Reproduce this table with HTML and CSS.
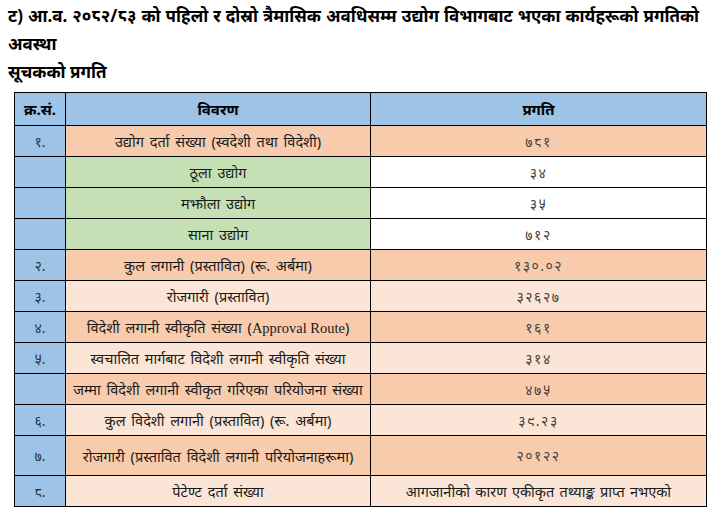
FILE: index.html
```html
<!DOCTYPE html>
<html lang="ne">
<head>
<meta charset="utf-8">
<link rel="stylesheet" href="styles.css">
</head>
<body>
<h1 class="title">ट) आ.व. २०८२/८३ को पहिलो र दोस्रो त्रैमासिक अवधिसम्म उद्योग विभागबाट भएका कार्यहरूको प्रगतिको अवस्था</h1>
<h2 class="subtitle">सूचकको प्रगति</h2>
<table class="progress">
  <colgroup><col class="c-sn"><col class="c-desc"><col class="c-val"></colgroup>
  <thead>
    <tr><th>क्र.सं.</th><th>विवरण</th><th>प्रगति</th></tr>
  </thead>
  <tbody>
    <tr class="dark"><td class="sn">१.</td><td>उद्योग दर्ता संख्या (स्वदेशी तथा विदेशी)</td><td class="num">७८१</td></tr>
    <tr class="green"><td class="sn"></td><td>ठूला उद्योग</td><td class="num">३४</td></tr>
    <tr class="green"><td class="sn"></td><td>मझौला उद्योग</td><td class="num">३५</td></tr>
    <tr class="green"><td class="sn"></td><td>साना उद्योग</td><td class="num">७१२</td></tr>
    <tr class="dark"><td class="sn">२.</td><td>कुल लगानी (प्रस्तावित) (रू. अर्बमा)</td><td class="num">१३०.०२</td></tr>
    <tr class="light"><td class="sn">३.</td><td>रोजगारी (प्रस्तावित)</td><td class="num">३२६२७</td></tr>
    <tr class="dark"><td class="sn">४.</td><td>विदेशी लगानी स्वीकृति संख्या (<span class="latin">Approval Route</span>)</td><td class="num">१६१</td></tr>
    <tr class="light"><td class="sn">५.</td><td>स्वचालित मार्गबाट विदेशी लगानी स्वीकृति संख्या</td><td class="num">३१४</td></tr>
    <tr class="dark"><td class="sn"></td><td>जम्मा विदेशी लगानी स्वीकृत गरिएका परियोजना संख्या</td><td class="num">४७५</td></tr>
    <tr class="light"><td class="sn">६.</td><td>कुल विदेशी लगानी (प्रस्तावित) (रू. अर्बमा)</td><td class="num">३९.२३</td></tr>
    <tr class="dark tall"><td class="sn">७.</td><td>रोजगारी (प्रस्तावित विदेशी लगानी परियोजनाहरूमा)</td><td class="num">२०१२२</td></tr>
    <tr class="light"><td class="sn">८.</td><td>पेटेण्ट दर्ता संख्या</td><td class="note">आगजानीको कारण एकीकृत तथ्याङ्क प्राप्त नभएको</td></tr>
  </tbody>
</table>
</body>
</html>
```

FILE: styles.css
```css
html, body {
  margin: 0;
  padding: 0;
  background: #ffffff;
}
body {
  padding: 0 8px;
  font-family: "Noto Sans", "Noto Serif Devanagari", "Lohit Devanagari", "FreeSerif", sans-serif;
  color: #000;
}
.title {
  margin: 0;
  font-size: 17px;
  font-weight: bold;
  line-height: 28px;
  padding-top: 2px;
  word-spacing: 0.6px;
}
.subtitle {
  margin: 0;
  font-size: 17px;
  font-weight: bold;
  line-height: 28px;
}
.progress {
  margin: 6px 0 0 6px;
  border-collapse: collapse;
  width: 692px;
  table-layout: fixed;
  border: 1.5px solid #3a3a3a;
}
.c-sn { width: 51px; }
.c-desc { width: 305px; }
.c-val { width: 336px; }
.progress th,
.progress td {
  border: 1px solid #000;
  text-align: center;
  padding: 0;
  height: 30px;
  font-size: 14.5px;
  word-spacing: 2px;
  white-space: nowrap;
  color: #1a1a1a;
}
.progress th {
  background: #9dc3e6;
  height: 32px;
  font-size: 15px;
  font-weight: bold;
  color: #000;
  word-spacing: 0;
}
.progress td.sn {
  background: #9dc3e6;
  color: #333;
  font-size: 14px;
  word-spacing: 0;
}
.progress td.num {
  color: #444;
  font-size: 14px;
  letter-spacing: 1.5px;
  word-spacing: 0;
}
.progress td.note {
  word-spacing: 1.5px;
}
.dark td { background: #f8cbad; }
.light td { background: #fbe5d6; }
.green td { background: #c5e0b4; }
.green td.num { background: #ffffff; }
.tall td { height: 39px; }
.latin {
  font-family: "Liberation Serif", serif;
  word-spacing: 0;
}
```
